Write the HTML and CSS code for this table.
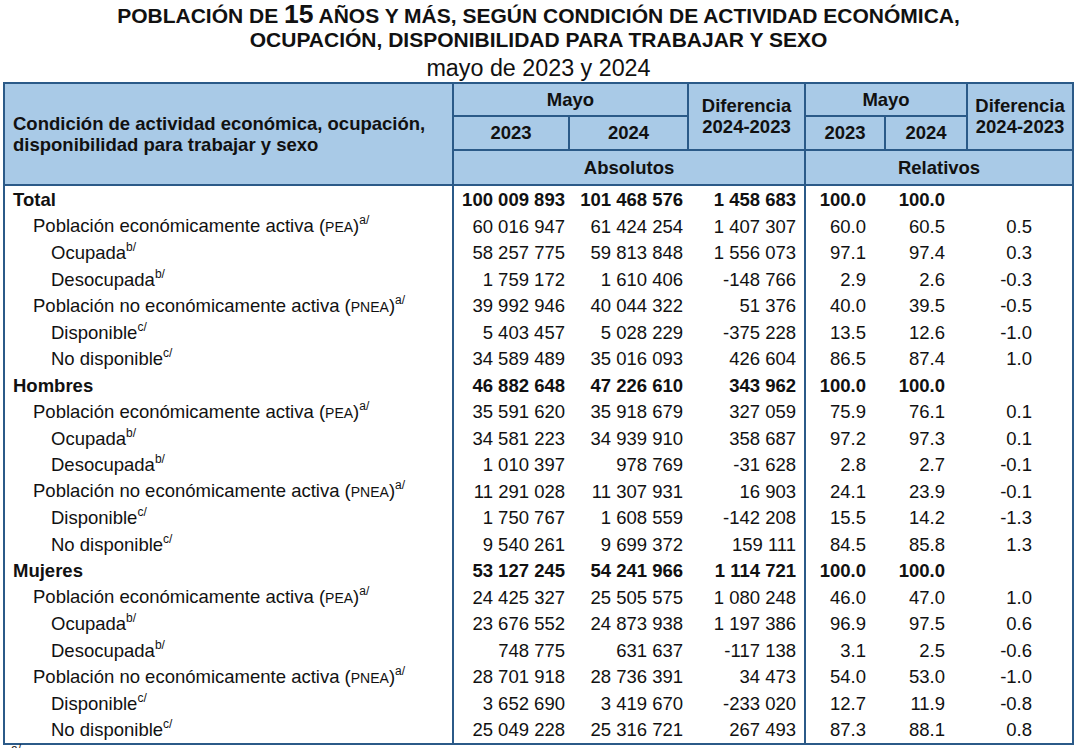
FILE: index.html
```html
<!DOCTYPE html>
<html lang="es">
<head>
<meta charset="utf-8">
<title>Población de 15 años y más</title>
<link rel="stylesheet" href="styles.css">
</head>
<body>
<div class="page">
  <div class="title">
    <div class="t1">POBLACIÓN DE <span class="big">15</span> AÑOS Y MÁS, SEGÚN CONDICIÓN DE ACTIVIDAD ECONÓMICA,</div>
    <div class="t2">OCUPACIÓN, DISPONIBILIDAD PARA TRABAJAR Y SEXO</div>
    <div class="t3">mayo de 2023 y 2024</div>
  </div>
  <table class="data">
    <colgroup>
      <col class="c1"><col class="c2"><col class="c3"><col class="c4"><col class="c5"><col class="c6"><col class="c7">
    </colgroup>
    <thead>
      <tr class="h1">
        <th rowspan="3" class="hlabel">Condición de actividad económica, ocupación,<br>disponibilidad para trabajar y sexo</th>
        <th colspan="2">Mayo</th>
        <th rowspan="2" class="hdiff">Diferencia<br>2024-2023</th>
        <th colspan="2">Mayo</th>
        <th rowspan="2" class="hdiff">Diferencia<br>2024-2023</th>
      </tr>
      <tr class="h2">
        <th>2023</th><th>2024</th><th>2023</th><th>2024</th>
      </tr>
      <tr class="h3">
        <th colspan="3">Absolutos</th>
        <th colspan="3">Relativos</th>
      </tr>
    </thead>
    <tbody>
      <tr class="grp"><td class="l0">Total</td><td>100 009 893</td><td>101 468 576</td><td>1 458 683</td><td>100.0</td><td>100.0</td><td></td></tr>
      <tr><td class="l1">Población económicamente activa (<span class="sm">PEA</span>)<sup>a/</sup></td><td>60 016 947</td><td>61 424 254</td><td>1 407 307</td><td>60.0</td><td>60.5</td><td>0.5</td></tr>
      <tr><td class="l2">Ocupada<sup>b/</sup></td><td>58 257 775</td><td>59 813 848</td><td>1 556 073</td><td>97.1</td><td>97.4</td><td>0.3</td></tr>
      <tr><td class="l2">Desocupada<sup>b/</sup></td><td>1 759 172</td><td>1 610 406</td><td>-148 766</td><td>2.9</td><td>2.6</td><td>-0.3</td></tr>
      <tr><td class="l1">Población no económicamente activa (<span class="sm">PNEA</span>)<sup>a/</sup></td><td>39 992 946</td><td>40 044 322</td><td>51 376</td><td>40.0</td><td>39.5</td><td>-0.5</td></tr>
      <tr><td class="l2">Disponible<sup>c/</sup></td><td>5 403 457</td><td>5 028 229</td><td>-375 228</td><td>13.5</td><td>12.6</td><td>-1.0</td></tr>
      <tr><td class="l2">No disponible<sup>c/</sup></td><td>34 589 489</td><td>35 016 093</td><td>426 604</td><td>86.5</td><td>87.4</td><td>1.0</td></tr>
      <tr class="grp"><td class="l0">Hombres</td><td>46 882 648</td><td>47 226 610</td><td>343 962</td><td>100.0</td><td>100.0</td><td></td></tr>
      <tr><td class="l1">Población económicamente activa (<span class="sm">PEA</span>)<sup>a/</sup></td><td>35 591 620</td><td>35 918 679</td><td>327 059</td><td>75.9</td><td>76.1</td><td>0.1</td></tr>
      <tr><td class="l2">Ocupada<sup>b/</sup></td><td>34 581 223</td><td>34 939 910</td><td>358 687</td><td>97.2</td><td>97.3</td><td>0.1</td></tr>
      <tr><td class="l2">Desocupada<sup>b/</sup></td><td>1 010 397</td><td>978 769</td><td>-31 628</td><td>2.8</td><td>2.7</td><td>-0.1</td></tr>
      <tr><td class="l1">Población no económicamente activa (<span class="sm">PNEA</span>)<sup>a/</sup></td><td>11 291 028</td><td>11 307 931</td><td>16 903</td><td>24.1</td><td>23.9</td><td>-0.1</td></tr>
      <tr><td class="l2">Disponible<sup>c/</sup></td><td>1 750 767</td><td>1 608 559</td><td>-142 208</td><td>15.5</td><td>14.2</td><td>-1.3</td></tr>
      <tr><td class="l2">No disponible<sup>c/</sup></td><td>9 540 261</td><td>9 699 372</td><td>159 111</td><td>84.5</td><td>85.8</td><td>1.3</td></tr>
      <tr class="grp"><td class="l0">Mujeres</td><td>53 127 245</td><td>54 241 966</td><td>1 114 721</td><td>100.0</td><td>100.0</td><td></td></tr>
      <tr><td class="l1">Población económicamente activa (<span class="sm">PEA</span>)<sup>a/</sup></td><td>24 425 327</td><td>25 505 575</td><td>1 080 248</td><td>46.0</td><td>47.0</td><td>1.0</td></tr>
      <tr><td class="l2">Ocupada<sup>b/</sup></td><td>23 676 552</td><td>24 873 938</td><td>1 197 386</td><td>96.9</td><td>97.5</td><td>0.6</td></tr>
      <tr><td class="l2">Desocupada<sup>b/</sup></td><td>748 775</td><td>631 637</td><td>-117 138</td><td>3.1</td><td>2.5</td><td>-0.6</td></tr>
      <tr><td class="l1">Población no económicamente activa (<span class="sm">PNEA</span>)<sup>a/</sup></td><td>28 701 918</td><td>28 736 391</td><td>34 473</td><td>54.0</td><td>53.0</td><td>-1.0</td></tr>
      <tr><td class="l2">Disponible<sup>c/</sup></td><td>3 652 690</td><td>3 419 670</td><td>-233 020</td><td>12.7</td><td>11.9</td><td>-0.8</td></tr>
      <tr><td class="l2">No disponible<sup>c/</sup></td><td>25 049 228</td><td>25 316 721</td><td>267 493</td><td>87.3</td><td>88.1</td><td>0.8</td></tr>
    </tbody>
  </table>
  <div class="note"><sup>a/</sup> Porcentaje calculado con respecto a la población de 15 años y más.</div>
</div>
</body>
</html>
```
FILE: styles.css
```css
html, body {
  margin: 0;
  padding: 0;
  background: #ffffff;
}
body {
  font-family: "Liberation Sans", Arial, sans-serif;
  color: #111;
  overflow: hidden;
}
.page {
  width: 1077px;
  height: 748px;
  overflow: hidden;
  padding-left: 3px;
  box-sizing: border-box;
}
.title {
  text-align: center;
  padding-right: 3px;
  padding-top: 1px;
}
.t1, .t2 {
  font-weight: bold;
  font-size: 21px;
  line-height: 26px;
  height: 26px;
}
.t1 .big {
  font-size: 26.5px;
}
.t3 {
  font-size: 23.3px;
  line-height: 30px;
  height: 29px;
}
.data {
  border-collapse: collapse;
  table-layout: fixed;
  width: 1071px;
  border: 2px solid #2b5a88;
  font-size: 18.5px;
}
.c1 { width: 449px; }
.c2 { width: 116px; }
.c3 { width: 119px; }
.c4 { width: 117px; }
.c5 { width: 80px; }
.c6 { width: 82px; }
.c7 { width: 106px; }
thead th {
  background: #a9cae7;
  border: 2px solid #2b5a88;
  font-weight: bold;
  text-align: center;
  vertical-align: middle;
  padding: 0 2px;
  line-height: 21px;
  color: #111;
}
.h1 { height: 33px; }
.h2 { height: 33.5px; }
.h3 { height: 35.5px; }
.hlabel {
  text-align: left !important;
  padding-left: 8px !important;
}
tbody td {
  height: 24.5px;
  padding: 2px 0 0 0;
  text-align: right;
  white-space: nowrap;
  line-height: 22px;
  vertical-align: middle;
}
tbody tr.grp td { font-weight: bold; }
tbody td:nth-child(1) { text-align: left; }
tbody td:nth-child(2) { border-left: 2px solid #2b5a88; padding-right: 4px; }
tbody td:nth-child(3) { padding-right: 5px; }
tbody td:nth-child(4) { padding-right: 8px; }
tbody td:nth-child(5) { border-left: 2px solid #2b5a88; padding-right: 19px; }
tbody td:nth-child(6) { padding-right: 22px; }
tbody td:nth-child(7) { padding-right: 40px; }
.l0 { padding-left: 8px !important; }
.l1 { padding-left: 28px !important; }
.l2 { padding-left: 46px !important; }
.sm { font-size: 14px; }
sup {
  font-size: 12px;
  line-height: 0;
  position: relative;
  top: -1px;
  vertical-align: super;
}
.note {
  font-size: 15px;
  line-height: 18px;
  padding-left: 8px;
  padding-top: 1px;
  color: #222;
}
```
